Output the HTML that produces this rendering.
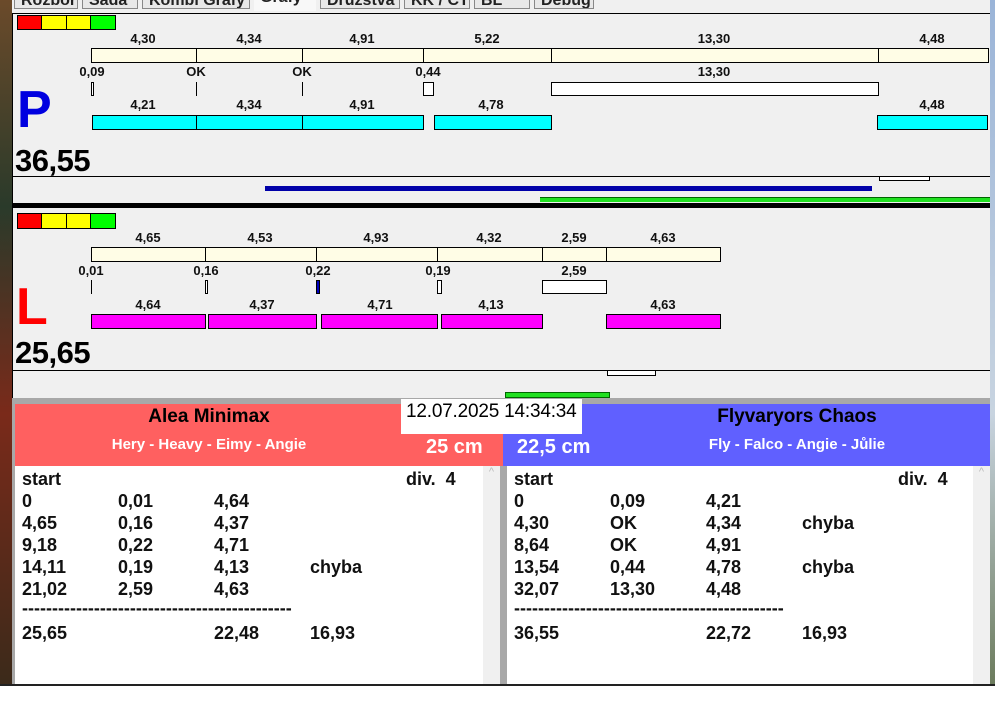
<!DOCTYPE html>
<html><head><meta charset="utf-8"><style>
*{margin:0;padding:0;box-sizing:border-box}
body{width:995px;height:701px;position:relative;overflow:hidden;background:#fff;font-family:"Liberation Sans",sans-serif}
div{position:absolute}
.b{border:1px solid #000}
.cr{background:#fffde6}
.cy{background:#00ffff}
.mg{background:#ff00ff}
.w{background:#fff}
.t{font-weight:bold;font-size:13px;transform:translateX(-50%);white-space:nowrap;color:#111}
.r{font-weight:bold;font-size:18px;white-space:nowrap;color:#111}
.tab{top:-9px;height:18px;background:#e8e8e8;border:1px solid #888;font-size:16px;font-weight:bold;color:#222;padding-left:6px;overflow:hidden;white-space:nowrap}
</style></head><body>
<div style="left:0;top:0;width:12px;height:690px;background:linear-gradient(#6b4a2a,#2a3a2a 30%,#7a2a1a 60%,#3a2a1a)"></div>
<div style="left:990px;top:0;width:5px;height:690px;background:linear-gradient(#9ab4d8,#c8d4e0 60%,#6a7a5a)"></div>
<div style="left:12px;top:0;width:978px;height:14px;background:#f0f0f0"></div>
<div class="tab" style="left:14px;width:64px">Rozbor</div>
<div class="tab" style="left:82px;width:56px">Sada</div>
<div class="tab" style="left:142px;width:108px">Kombi Grafy</div>
<div class="tab" style="left:254px;top:-11px;width:62px;height:22px;background:#f8f8f8;border:0">Grafy</div>
<div class="tab" style="left:320px;width:80px">Družstva</div>
<div class="tab" style="left:404px;width:66px">KK / CT</div>
<div class="tab" style="left:474px;width:56px">BL</div>
<div class="tab" style="left:534px;width:60px">Debug</div>
<div style="left:12px;top:13px;width:978px;height:387px;background:#f0f0f0;border-top:1px solid #000;border-left:1px solid #000"></div>

<!-- P panel -->
<div class="b" style="left:17px;top:15px;width:25px;height:15px;background:#f00"></div>
<div class="b" style="left:41px;top:15px;width:26px;height:15px;background:#ff0"></div>
<div class="b" style="left:66px;top:15px;width:25px;height:15px;background:#ff0"></div>
<div class="b" style="left:90px;top:15px;width:26px;height:15px;background:#0f0"></div>
<div class="t" style="left:143px;top:31px">4,30</div><div class="t" style="left:249px;top:31px">4,34</div><div class="t" style="left:362px;top:31px">4,91</div><div class="t" style="left:487px;top:31px">5,22</div><div class="t" style="left:714px;top:31px">13,30</div><div class="t" style="left:932px;top:31px">4,48</div>
<div class="b cr" style="left:91px;top:48px;width:106px;height:15px"></div><div class="b cr" style="left:196px;top:48px;width:107px;height:15px"></div><div class="b cr" style="left:302px;top:48px;width:122px;height:15px"></div><div class="b cr" style="left:423px;top:48px;width:129px;height:15px"></div><div class="b cr" style="left:551px;top:48px;width:328px;height:15px"></div><div class="b cr" style="left:878px;top:48px;width:111px;height:15px"></div>
<div class="t" style="left:92px;top:64px">0,09</div><div class="t" style="left:196px;top:64px">OK</div><div class="t" style="left:302px;top:64px">OK</div><div class="t" style="left:428px;top:64px">0,44</div><div class="t" style="left:714px;top:64px">13,30</div>
<div class="b w" style="left:91px;top:82px;width:3px;height:14px"></div><div style="left:196px;top:82px;width:1px;height:14px;background:#000"></div><div style="left:302px;top:82px;width:1px;height:14px;background:#000"></div><div class="b w" style="left:423px;top:82px;width:11px;height:14px"></div><div class="b w" style="left:551px;top:82px;width:328px;height:14px"></div>
<div style="left:17px;top:80px;font-size:52px;font-weight:bold;color:#0000e0;line-height:60px">P</div>
<div class="t" style="left:143px;top:97px">4,21</div><div class="t" style="left:249px;top:97px">4,34</div><div class="t" style="left:362px;top:97px">4,91</div><div class="t" style="left:491px;top:97px">4,78</div><div class="t" style="left:932px;top:97px">4,48</div>
<div class="b cy" style="left:92px;top:115px;width:105px;height:15px"></div><div class="b cy" style="left:196px;top:115px;width:107px;height:15px"></div><div class="b cy" style="left:302px;top:115px;width:122px;height:15px"></div><div class="b cy" style="left:434px;top:115px;width:118px;height:15px"></div><div class="b cy" style="left:877px;top:115px;width:111px;height:15px"></div>
<div style="left:15px;top:143px;font-size:31px;font-weight:bold;letter-spacing:-0.5px">36,55</div>
<div style="left:12px;top:176px;width:978px;height:1px;background:#000"></div>
<div style="left:12px;top:176px;width:1px;height:5px;background:#000"></div>
<div class="b w" style="left:879px;top:176px;width:51px;height:5px"></div>
<div style="left:265px;top:186px;width:607px;height:5px;background:#0000a8"></div>
<div style="left:540px;top:197px;width:450px;height:5px;background:#20e020;border-top:1px solid #060"></div>
<div style="left:12px;top:203px;width:978px;height:5px;background:#000"></div>

<!-- L panel -->
<div class="b" style="left:17px;top:213px;width:25px;height:16px;background:#f00"></div>
<div class="b" style="left:41px;top:213px;width:26px;height:16px;background:#ff0"></div>
<div class="b" style="left:66px;top:213px;width:25px;height:16px;background:#ff0"></div>
<div class="b" style="left:90px;top:213px;width:26px;height:16px;background:#0f0"></div>
<div class="t" style="left:148px;top:230px">4,65</div><div class="t" style="left:260px;top:230px">4,53</div><div class="t" style="left:376px;top:230px">4,93</div><div class="t" style="left:489px;top:230px">4,32</div><div class="t" style="left:574px;top:230px">2,59</div><div class="t" style="left:663px;top:230px">4,63</div>
<div class="b cr" style="left:91px;top:247px;width:115px;height:15px"></div><div class="b cr" style="left:205px;top:247px;width:112px;height:15px"></div><div class="b cr" style="left:316px;top:247px;width:122px;height:15px"></div><div class="b cr" style="left:437px;top:247px;width:106px;height:15px"></div><div class="b cr" style="left:542px;top:247px;width:65px;height:15px"></div><div class="b cr" style="left:606px;top:247px;width:115px;height:15px"></div>
<div class="t" style="left:91px;top:263px">0,01</div><div class="t" style="left:206px;top:263px">0,16</div><div class="t" style="left:318px;top:263px">0,22</div><div class="t" style="left:438px;top:263px">0,19</div><div class="t" style="left:574px;top:263px">2,59</div>
<div style="left:91px;top:280px;width:1px;height:14px;background:#000"></div><div class="b w" style="left:205px;top:280px;width:3px;height:14px"></div><div class="b" style="left:316px;top:280px;width:4px;height:14px;background:#0000c0"></div><div class="b w" style="left:437px;top:280px;width:5px;height:14px"></div><div class="b w" style="left:542px;top:280px;width:65px;height:14px"></div>
<div style="left:16px;top:277px;font-size:52px;font-weight:bold;color:#f00;line-height:60px">L</div>
<div class="t" style="left:148px;top:297px">4,64</div><div class="t" style="left:262px;top:297px">4,37</div><div class="t" style="left:380px;top:297px">4,71</div><div class="t" style="left:491px;top:297px">4,13</div><div class="t" style="left:663px;top:297px">4,63</div>
<div class="b mg" style="left:91px;top:314px;width:115px;height:15px"></div><div class="b mg" style="left:208px;top:314px;width:109px;height:15px"></div><div class="b mg" style="left:321px;top:314px;width:117px;height:15px"></div><div class="b mg" style="left:441px;top:314px;width:102px;height:15px"></div><div class="b mg" style="left:606px;top:314px;width:115px;height:15px"></div>
<div style="left:15px;top:335px;font-size:31px;font-weight:bold;letter-spacing:-0.5px">25,65</div>
<div style="left:12px;top:370px;width:978px;height:1px;background:#000"></div>
<div style="left:12px;top:370px;width:1px;height:5px;background:#000"></div>
<div class="b w" style="left:607px;top:370px;width:49px;height:6px"></div>
<div style="left:505px;top:392px;width:105px;height:6px;background:#20e020;border:1px solid #060"></div>

<!-- bottom -->
<div style="left:12px;top:398px;width:978px;height:287px;background:#a8a8a8"></div>
<div style="left:15px;top:404px;width:488px;height:62px;background:#ff6060"></div>
<div style="left:503px;top:404px;width:487px;height:62px;background:#6060ff"></div>
<div style="left:15px;top:406px;width:388px;text-align:center;font-size:19px;font-weight:bold">Alea Minimax</div>
<div style="left:15px;top:436px;width:388px;text-align:center;font-size:15px;font-weight:bold;color:#fff">Hery - Heavy - Eimy - Angie</div>
<div style="left:426px;top:436px;font-size:20px;font-weight:bold;color:#fff">25 cm</div>
<div style="left:517px;top:436px;font-size:20px;font-weight:bold;color:#fff">22,5 cm</div>
<div style="left:603px;top:406px;width:388px;text-align:center;font-size:19px;font-weight:bold">Flyvaryors Chaos</div>
<div style="left:603px;top:436px;width:388px;text-align:center;font-size:15px;font-weight:bold;color:#fff">Fly - Falco - Angie - Jůlie</div>
<div style="left:401px;top:399px;width:181px;height:35px;background:#fff;font-size:19px;padding:2px 0 0 5px;letter-spacing:-0.2px">12.07.2025 14:34:34</div>
<div style="left:15px;top:466px;width:468px;height:218px;background:#fff"></div>
<div style="left:483px;top:466px;width:17px;height:218px;background:#f0f0f0;color:#bbb;font-size:11px;text-align:center">^</div>
<div style="left:507px;top:466px;width:466px;height:218px;background:#fff"></div>
<div style="left:973px;top:466px;width:17px;height:218px;background:#f0f0f0;color:#bbb;font-size:11px;text-align:center">^</div>
<div style="left:0;top:684px;width:995px;height:2px;background:#222"></div>
<div style="left:0;top:686px;width:995px;height:15px;background:#fff"></div>

<div class="r" style="left:22px;top:469px">start</div><div class="r" style="left:406px;top:469px">div.&nbsp; 4</div>
<div class="r" style="left:22px;top:491px">0</div><div class="r" style="left:118px;top:491px">0,01</div><div class="r" style="left:214px;top:491px">4,64</div>
<div class="r" style="left:22px;top:513px">4,65</div><div class="r" style="left:118px;top:513px">0,16</div><div class="r" style="left:214px;top:513px">4,37</div>
<div class="r" style="left:22px;top:535px">9,18</div><div class="r" style="left:118px;top:535px">0,22</div><div class="r" style="left:214px;top:535px">4,71</div>
<div class="r" style="left:22px;top:557px">14,11</div><div class="r" style="left:118px;top:557px">0,19</div><div class="r" style="left:214px;top:557px">4,13</div><div class="r" style="left:310px;top:557px">chyba</div>
<div class="r" style="left:22px;top:579px">21,02</div><div class="r" style="left:118px;top:579px">2,59</div><div class="r" style="left:214px;top:579px">4,63</div>
<div class="r" style="left:22px;top:598px;width:270px;overflow:hidden">-------------------------------------------------------</div>
<div class="r" style="left:22px;top:623px">25,65</div><div class="r" style="left:214px;top:623px">22,48</div><div class="r" style="left:310px;top:623px">16,93</div>

<div class="r" style="left:514px;top:469px">start</div><div class="r" style="left:898px;top:469px">div.&nbsp; 4</div>
<div class="r" style="left:514px;top:491px">0</div><div class="r" style="left:610px;top:491px">0,09</div><div class="r" style="left:706px;top:491px">4,21</div>
<div class="r" style="left:514px;top:513px">4,30</div><div class="r" style="left:610px;top:513px">OK</div><div class="r" style="left:706px;top:513px">4,34</div><div class="r" style="left:802px;top:513px">chyba</div>
<div class="r" style="left:514px;top:535px">8,64</div><div class="r" style="left:610px;top:535px">OK</div><div class="r" style="left:706px;top:535px">4,91</div>
<div class="r" style="left:514px;top:557px">13,54</div><div class="r" style="left:610px;top:557px">0,44</div><div class="r" style="left:706px;top:557px">4,78</div><div class="r" style="left:802px;top:557px">chyba</div>
<div class="r" style="left:514px;top:579px">32,07</div><div class="r" style="left:610px;top:579px">13,30</div><div class="r" style="left:706px;top:579px">4,48</div>
<div class="r" style="left:514px;top:598px;width:270px;overflow:hidden">-------------------------------------------------------</div>
<div class="r" style="left:514px;top:623px">36,55</div><div class="r" style="left:706px;top:623px">22,72</div><div class="r" style="left:802px;top:623px">16,93</div>
</body></html>
